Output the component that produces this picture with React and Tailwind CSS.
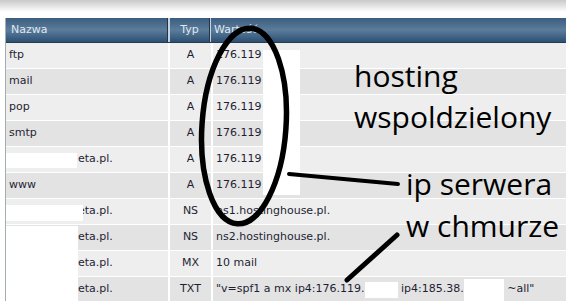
import React from 'react';

const rows = [
  { name: 'ftp', type: 'A', value: '176.119' },
  { name: 'mail', type: 'A', value: '176.119' },
  { name: 'pop', type: 'A', value: '176.119' },
  { name: 'smtp', type: 'A', value: '176.119' },
  { name: 'eta.pl.', type: 'A', value: '176.119', masked: true },
  { name: 'www', type: 'A', value: '176.119' },
  { name: 'eta.pl.', type: 'NS', value: 'ns1.hostinghouse.pl.', masked: true },
  { name: 'eta.pl.', type: 'NS', value: 'ns2.hostinghouse.pl.', masked: true },
  { name: 'eta.pl.', type: 'MX', value: '10 mail', masked: true },
  { name: 'eta.pl.', type: 'TXT', value: 'spf', masked: true },
];

function SpfValue() {
  return (
    <span className="flex items-center whitespace-pre">
      <span>"v=spf1 a mx ip4:176.119.</span>
      <span className="w-[33px] h-[16px] bg-white"></span>
      <span> ip4:185.38.</span>
      <span className="w-[40px] h-[22px] bg-white"></span>
      <span> ~all"</span>
    </span>
  );
}

export default function App() {
  return (
    <div className="relative w-[566px] h-[301px] overflow-hidden bg-white font-['DejaVu_Sans',sans-serif]">
      {/* top bar */}
      <div className="h-[12px] bg-gradient-to-b from-[#c9c9c9] to-white"></div>

      <div className="mt-[6px] ml-[5px] border-l border-[#a3abb3]">
        {/* header */}
        <div className="flex h-[25px] bg-gradient-to-b from-[#3b5d7f] via-[#5c7c9b] to-[#2c5073] border-b border-[#283a4c] text-[11px] text-[#dfe8f1]">
          <div className="w-[162px] pl-[5px] flex items-center border-r border-[#243548]">Nazwa</div>
          <div className="w-[2px] bg-[#c8d3de]"></div>
          <div className="w-[40px] flex items-center justify-center border-r border-[#243548]">Typ</div>
          <div className="w-[1px] bg-[#c8d3de]"></div>
          <div className="flex-1 pl-[3px] flex items-center">Wartość</div>
        </div>

        {/* rows */}
        {rows.map((r, i) => (
          <div
            key={i}
            className={`flex h-[26px] border-b border-white text-[11px] text-[#1f1f33] ${
              i % 2 === 0 ? 'bg-[#eeeeee]' : 'bg-[#e3e3e3]'
            }`}
          >
            <div className={`w-[162px] flex items-center ${r.masked ? 'pl-[72px]' : 'pl-[3px]'}`}>{r.name}</div>
            <div className="w-[2px] bg-white"></div>
            <div className="w-[41px] flex items-center justify-center">{r.type}</div>
            <div className="w-[2px] bg-white"></div>
            <div className="flex-1 pl-[3px] flex items-center">
              {r.value === 'spf' ? <SpfValue /> : r.value}
            </div>
          </div>
        ))}
      </div>

      {/* redaction boxes */}
      <div className="absolute left-[263px] top-[50px] w-[37px] h-[145px] bg-white"></div>
      <div className="absolute left-[6px] top-[153px] w-[71px] h-[15px] bg-white"></div>
      <div className="absolute left-[6px] top-[205px] w-[77px] h-[16px] bg-white"></div>
      <div className="absolute left-[6px] top-[226px] w-[72px] h-[75px] bg-white"></div>

      {/* hand drawn marks */}
      <svg className="absolute left-0 top-0" width="566" height="301" viewBox="0 0 566 301">
        <ellipse cx="244" cy="126" rx="42" ry="98" transform="rotate(4 244 126)" fill="none" stroke="#000" strokeWidth="5.5" />
        <path d="M289 174 L398 184" stroke="#000" strokeWidth="4" strokeLinecap="round" />
        <path d="M397 235 L347 280" stroke="#000" strokeWidth="5" strokeLinecap="round" />
      </svg>

      {/* notes */}
      <div className="absolute left-[354px] top-[55px] font-['Open_Sans',sans-serif] text-[30px] leading-[41px] text-black">
        <div>hosting</div>
        <div>wspoldzielony</div>
      </div>
      <div className="absolute left-[406px] top-[163px] font-['Open_Sans',sans-serif] text-[30px] leading-[42px] text-black">
        <div>ip serwera</div>
        <div>w chmurze</div>
      </div>
    </div>
  );
}
